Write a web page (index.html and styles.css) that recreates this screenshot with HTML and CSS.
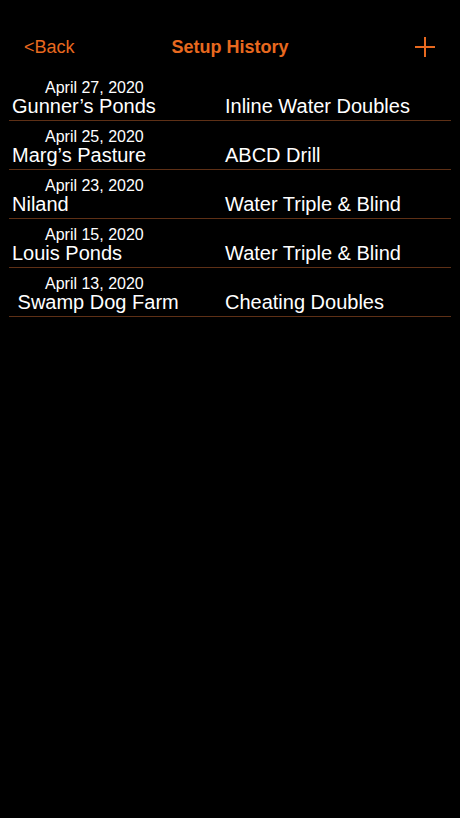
FILE: index.html
```html
<!DOCTYPE html>
<html lang="en">
<head>
    <meta charset="UTF-8">
    <meta name="viewport" content="width=device-width, initial-scale=1.0">
    <title>Setup History</title>
    <link rel="stylesheet" href="styles.css">
</head>
<body>
<div class="nav">
    <a class="back" href="#">&lt;Back</a>
    <h1>Setup History</h1>
    <button class="add" aria-label="Add">
        <svg width="20" height="20" viewBox="0 0 20 20">
            <path d="M10 0V20M0 10H20" stroke="#e8691f" stroke-width="2"/>
        </svg>
    </button>
</div>
<ul class="list">
    <li class="row">
        <div class="date">April 27, 2020</div>
        <div class="cols"><span class="place">Gunner’s Ponds</span><span class="setup">Inline Water Doubles</span></div>
    </li>
    <li class="row">
        <div class="date">April 25, 2020</div>
        <div class="cols"><span class="place">Marg’s Pasture</span><span class="setup">ABCD Drill</span></div>
    </li>
    <li class="row">
        <div class="date">April 23, 2020</div>
        <div class="cols"><span class="place">Niland</span><span class="setup">Water Triple &amp; Blind</span></div>
    </li>
    <li class="row">
        <div class="date">April 15, 2020</div>
        <div class="cols"><span class="place">Louis Ponds</span><span class="setup">Water Triple &amp; Blind</span></div>
    </li>
    <li class="row">
        <div class="date">April 13, 2020</div>
        <div class="cols"><span class="place">&nbsp;Swamp Dog Farm</span><span class="setup">Cheating Doubles</span></div>
    </li>
</ul>
</body>
</html>
```

FILE: styles.css
```css
body, html {
    margin: 0;
    padding: 0;
    background: #000;
    color: #fff;
    font-family: 'Liberation Sans', Arial, sans-serif;
    height: 100%;
}
.nav {
    display: flex;
    justify-content: space-between;
    align-items: center;
    height: 30px;
    padding: 32px 24px 10px 24px;
}
.back {
    color: #e8691f;
    text-decoration: none;
    font-size: 18px;
    width: 60px;
}
h1 {
    margin: 0;
    color: #e8691f;
    font-size: 18px;
    font-weight: bold;
}
.add {
    width: 60px;
    padding: 0 1px 0 0;
    background: none;
    border: none;
    display: flex;
    justify-content: flex-end;
}
.list {
    list-style: none;
    margin: 0;
    padding: 0 9px;
}
.row {
    padding: 7px 0 3px 0;
    border-bottom: 1px solid #5e3016;
}
.date {
    font-size: 16px;
    line-height: 17px;
    padding-left: 36px;
}
.cols {
    display: grid;
    grid-template-columns: 213px 1fr;
    font-size: 20px;
    line-height: 21px;
    padding-left: 3px;
}
```
